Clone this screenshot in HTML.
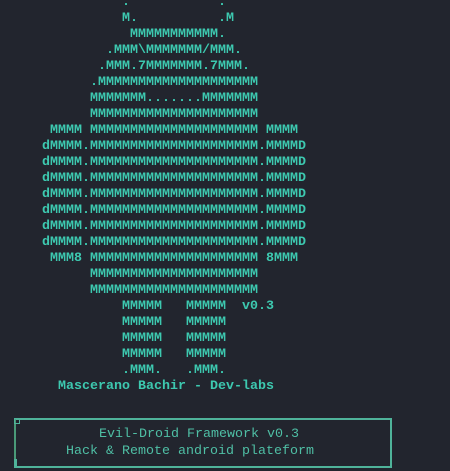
<!DOCTYPE html>
<html><head><meta charset="utf-8"><style>
html,body{margin:0;padding:0;background:#22252e;width:450px;height:471px;overflow:hidden}
pre{position:absolute;left:42px;top:-5px;margin:0;font-family:"Liberation Mono",monospace;font-size:13.33px;line-height:16px;color:#3dc9b0;font-weight:bold;white-space:pre}
.box{position:absolute;left:14px;top:418px;width:374px;height:46px;border:2px solid #4fb39a;border-left-color:#4a9a78}
.box:before{content:"";position:absolute;left:-2px;top:-2px;width:4px;height:4px;border:1px solid #4fb39a}
.box:after{content:"";position:absolute;left:-2px;bottom:-2px;width:3px;height:9px;background:#4fb39a}
.t{position:absolute;font-family:"Liberation Mono",monospace;font-size:13.33px;color:#4fbfa5;white-space:pre}
</style></head><body>
<pre>          .           .
          M.          .M
           MMMMMMMMMMM.
        .MMM\MMMMMMM/MMM.
       .MMM.7MMMMMMM.7MMM.
      .MMMMMMMMMMMMMMMMMMMM
      MMMMMMM.......MMMMMMM
      MMMMMMMMMMMMMMMMMMMMM
 MMMM MMMMMMMMMMMMMMMMMMMMM MMMM
dMMMM.MMMMMMMMMMMMMMMMMMMMM.MMMMD
dMMMM.MMMMMMMMMMMMMMMMMMMMM.MMMMD
dMMMM.MMMMMMMMMMMMMMMMMMMMM.MMMMD
dMMMM.MMMMMMMMMMMMMMMMMMMMM.MMMMD
dMMMM.MMMMMMMMMMMMMMMMMMMMM.MMMMD
dMMMM.MMMMMMMMMMMMMMMMMMMMM.MMMMD
dMMMM.MMMMMMMMMMMMMMMMMMMMM.MMMMD
 MMM8 MMMMMMMMMMMMMMMMMMMMM 8MMM
      MMMMMMMMMMMMMMMMMMMMM
      MMMMMMMMMMMMMMMMMMMMM
          MMMMM   MMMMM  v0.3
          MMMMM   MMMMM
          MMMMM   MMMMM
          MMMMM   MMMMM
          .MMM.   .MMM.
  Mascerano Bachir - Dev-labs</pre>
<div class="box"></div>
<div class="t" style="left:99px;top:427px">Evil-Droid Framework v0.3</div>
<div class="t" style="left:66px;top:444px">Hack &amp; Remote android plateform</div>
</body></html>
